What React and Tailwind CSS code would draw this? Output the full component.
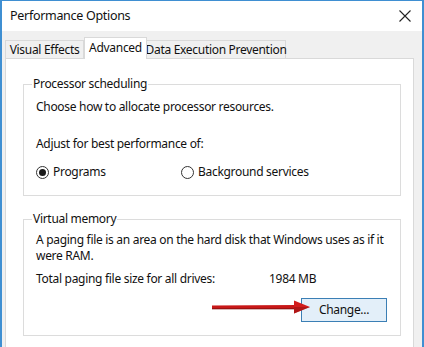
import React from "react";

function Radio({ checked }) {
  return (
    <span className="relative inline-flex h-[13px] w-[13px] shrink-0 items-center justify-center rounded-full border border-[#333] bg-white">
      {checked && <span className="h-[7px] w-[7px] rounded-full bg-[#1a1a1a]" />}
    </span>
  );
}

export default function App() {
  return (
    <div
      className="relative h-[347px] w-[424px] overflow-hidden whitespace-nowrap border-x-2 border-t border-[#3f8fd2] bg-[#f0f0f0] text-[12px] leading-[16px] tracking-[-0.3px] text-[#111]"
      style={{ fontFamily: '"Noto Sans", "Open Sans", sans-serif' }}
    >
      {/* title bar */}
      <div className="flex h-[30px] items-center justify-between bg-white pl-[8px] pr-[8px]">
        <span className="text-[12.5px] text-[#111]">Performance Options</span>
        <svg width="12" height="12" viewBox="0 0 12 12" className="mr-[3px]">
          <path d="M0.5 0.5 L11.5 11.5 M11.5 0.5 L0.5 11.5" stroke="#222" strokeWidth="1.1" fill="none" />
        </svg>
      </div>

      {/* tabs */}
      <div className="flex items-end pl-[3px] pt-[6px]">
        <div className="flex h-[18px] w-[79px] items-center justify-center border border-b-0 border-[#d9d9d9] bg-[#f0f0f0]">
          Visual Effects
        </div>
        <div className="relative z-10 -mb-px flex h-[22px] w-[63px] items-start justify-center border border-b-0 border-[#d9d9d9] bg-white pt-[2px]">
          Advanced
        </div>
        <div className="flex h-[18px] w-[139px] items-center justify-center border border-b-0 border-l-0 border-[#d9d9d9] bg-[#f0f0f0]">
          Data Execution Prevention
        </div>
      </div>

      {/* panel */}
      <div className="ml-[3px] h-[300px] w-[409px] border border-[#d9d9d9] bg-white">
        <fieldset className="ml-[17px] mt-[17px] h-[120px] w-[378px] border border-[#dcdcdc]">
          <legend className="ml-[8px] px-[1px]">Processor scheduling</legend>
          <div className="px-[12px]">
            <div className="mt-[7px]">Choose how to allocate processor resources.</div>
            <div className="mt-[21px]">Adjust for best performance of:</div>
            <div className="mt-[12px] flex items-center">
              <div className="flex w-[145px] items-center gap-[4px]">
                <Radio checked />
                <span>Programs</span>
              </div>
              <div className="flex items-center gap-[4px]">
                <Radio />
                <span>Background services</span>
              </div>
            </div>
          </div>
        </fieldset>

        <fieldset className="ml-[17px] mt-[15px] h-[125px] w-[378px] border border-[#dcdcdc]">
          <legend className="ml-[8px] px-[1px]">Virtual memory</legend>
          <div className="px-[12px]">
            <div className="mt-[5px]">
              A paging file is an area on the hard disk that Windows uses as if it
              <br />
              were RAM.
            </div>
            <div className="mt-[7px] flex">
              <span className="w-[233px]">Total paging file size for all drives:</span>
              <span>1984 MB</span>
            </div>
            <div className="mt-[11px] flex justify-end pr-[1px]">
              <button className="flex h-[24px] w-[86px] items-center justify-center border border-[#3b7fb5] bg-[#e3eff9] text-[12px] text-[#111]">
                Change...
              </button>
            </div>
          </div>
        </fieldset>
      </div>

      {/* red arrow annotation */}
      <svg
        className="absolute left-[206px] top-[297px]"
        width="104"
        height="18"
        viewBox="0 0 104 18"
      >
        <path d="M4 7.5 L90 7 L90 11 L4 11 Z" fill="#c81818" />
        <path d="M4 10 L90 10 L90 11.5 L4 11.5 Z" fill="#7f0e0e" opacity="0.6" />
        <path d="M86 2.5 L102 9 L86 15.5 Z" fill="#d21c1c" />
        <path d="M86 9 L102 9 L86 15.5 Z" fill="#9a1212" opacity="0.6" />
      </svg>
    </div>
  );
}
